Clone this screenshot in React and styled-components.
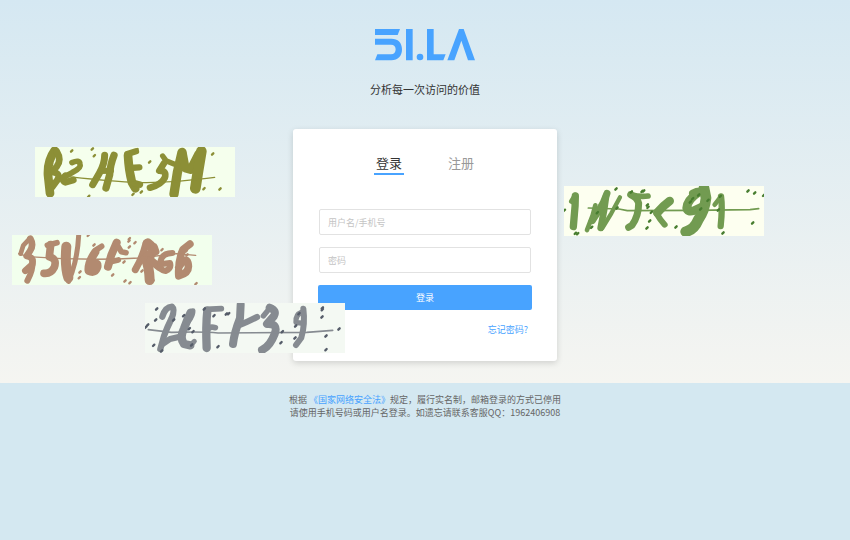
import React from "react";
import styled, { createGlobalStyle } from "styled-components";

const GlobalStyle = createGlobalStyle`
  *, *::before, *::after { box-sizing: border-box; }
  body {
    margin: 0;
    background: #d4e8f1;
    color: #666;
    font-family: "Noto Sans CJK SC", "Noto Sans", sans-serif;
    font-size: 9px;
  }
  button, input { font: inherit; }
`;

const Page = styled.div`
  position: relative;
  overflow: hidden;
`;

const Hero = styled.main`
  display: flex;
  flex-direction: column;
  align-items: center;
  padding: 28px 16px 22px;
  background: linear-gradient(180deg, #d5e8f2 0%, #f5f5f1 100%);
`;

const LogoMark = styled.svg`
  display: block;
  width: 102px;
  height: 34px;
  fill: #48a3ff;
`;

const Tagline = styled.h1`
  margin: 19px 0 31px;
  font-size: 11px;
  font-weight: 400;
  line-height: 17px;
  color: #333;
`;

const Card = styled.section`
  width: 100%;
  max-width: 264px;
  padding: 24px 26px 23px;
  border-radius: 3px;
  background: #fff;
  box-shadow: 0 2px 6px rgba(0, 0, 0, 0.15);
`;

const Tabs = styled.nav`
  display: flex;
  justify-content: center;
  gap: 42px;
`;

const Tab = styled.button`
  padding: 0 2px;
  border: 0;
  border-bottom: 2px solid ${(p) => (p.$active ? "#48a3ff" : "transparent")};
  background: none;
  font-size: 13px;
  line-height: 20px;
  color: ${(p) => (p.$active ? "#333" : "#999")};
  cursor: pointer;
`;

const Form = styled.form`
  display: flex;
  flex-direction: column;
  gap: 12px;
  margin-top: 34px;
`;

const Field = styled.input`
  width: 100%;
  height: 26px;
  padding: 0 8px;
  border: 1px solid #e2e2e2;
  border-radius: 2px;
  background: #fff;
  color: #333;
  &::placeholder { color: #c4c4c4; opacity: 1; }
`;

const Submit = styled.button`
  height: 25px;
  margin: 0 -1px;
  padding: 0;
  border: 0;
  border-radius: 2px;
  background: #48a3ff;
  color: #fff;
  cursor: pointer;
`;

const Link = styled.a`
  color: #48a3ff;
  text-decoration: none;
`;

const FormLink = styled(Link)`
  align-self: flex-end;
  padding-right: 3px;
  line-height: 16px;
`;

const Notice = styled.footer`
  padding: 10px 16px;
  text-align: center;
  line-height: 13px;
  p { margin: 0; }
`;

const Picture = styled.svg`
  position: absolute;
  left: ${(p) => p.$left}px;
  top: ${(p) => p.$top}px;
  width: 200px;
  height: 50px;
  background: ${(p) => p.$paper};
  color: ${(p) => p.$ink};
  fill: none;
  stroke: currentColor;
  stroke-linecap: round;
  stroke-linejoin: round;
`;

const captchas = [
  {
    left: 35, top: 147, paper: "#f5ffed", ink: "#8c8f36", dotInk: "#8c8f36", box: "15 21 600 150",
    strokes: [
      [26, "M74 32 Q52 62 54 105 L60 160"],
      [20, "M80 34 Q96 60 80 80 L66 96 Q94 99 82 120 L66 142"],
      [17, "M126 68 Q148 58 150 72 Q155 84 126 98 L98 113"],
      [20, "M106 107 Q92 120 106 127 L130 120"],
      [21, "M224 46 Q224 72 208 100 L188 134"],
      [22, "M252 46 Q240 76 239 104 L228 144"],
      [18, "M212 93 L243 92"],
      [26, "M294 46 Q296 90 306 128 L316 145"],
      [19, "M292 42 L318 34 M300 84 L328 82 M308 128 L330 134"],
      [16, "M398 48 L408 62 L432 72"],
      [20, "M402 70 L388 92 Q412 92 404 114 Q394 134 360 143"],
      [28, "M456 37 L442 98 L432 162"],
      [26, "M458 42 L466 84 L482 89 L506 42"],
      [32, "M514 34 Q504 92 496 145"],
      [4, "M115 110 Q280 128 350 128 Q440 127 530 115 L554 112"],
    ],
    dots: [[125, 33], [187, 27], [193, 47], [359, 66], [548, 42], [522, 146], [570, 147], [176, 169], [334, 156], [309, 163], [321, 29]],
  },
  {
    left: 564, top: 186, paper: "#fdfff0", ink: "#729b51", dotInk: "#477d2f", box: "12 18 600 150",
    strokes: [
      [22, "M46 48 Q46 80 43 104 L40 140"],
      [16, "M35 64 L46 46"],
      [14, "M106 76 L98 106 L81 150"],
      [21, "M141 40 Q131 70 116 92 L97 122"],
      [20, "M138 50 L132 92 L122 144"],
      [13, "M180 52 L154 100 L127 144"],
      [21, "M212 44 Q232 52 236 70 Q236 108 216 136 L206 142"],
      [17, "M213 44 Q242 52 264 48"],
      [26, "M329 63 Q311 76 292 98"],
      [18, "M290 101 Q301 120 314 134"],
      [26, "M414 38 Q382 60 380 84 Q382 98 402 92 L426 81"],
      [32, "M432 24 L438 54 Q434 92 415 119 Q402 150 377 155"],
      [22, "M398 40 Q437 20 436 65"],
      [19, "M483 49 Q488 83 482 138"],
      [14, "M482 51 L464 74"],
      [5, "M85 84 L177 87 L202 92 L403 91 L570 89 L596 86"],
    ],
    dots: [[168, 27], [246, 34], [251, 33], [214, 36], [262, 75], [264, 82], [274, 97], [269, 123], [261, 144], [348, 141], [95, 142], [46, 160], [53, 161], [489, 159], [578, 129], [564, 33], [584, 39], [611, 46], [444, 61], [475, 90], [422, 87], [398, 56], [416, 45], [391, 66], [481, 49], [112, 98], [171, 84], [13, 91]],
  },
  {
    left: 12, top: 235, paper: "#f2ffed", ink: "#b28a70", dotInk: "#b28a70", box: "12 15 600 150",
    strokes: [
      [14, "M38 71 L46 46 L65 26"],
      [20, "M67 26 Q78 45 66 63 L56 78 Q79 82 72 104 L52 122"],
      [18, "M74 90 Q76 120 58 152"],
      [17, "M118 46 L147 38"],
      [23, "M128 44 L124 80 Q148 86 139 112 Q129 132 108 130"],
      [30, "M175 50 Q170 110 181 143"],
      [15, "M212 16 Q209 76 193 124 L182 154"],
      [17, "M264 60 L281 49"],
      [25, "M262 66 Q240 98 242 122 Q262 132 268 110 Q270 94 247 105"],
      [24, "M326 38 L310 75 L300 110"],
      [17, "M324 39 L340 65 L354 68 M308 95 L331 90"],
      [21, "M414 40 Q402 86 382 119"],
      [30, "M419 40 Q450 62 413 86 Q424 112 425 150"],
      [23, "M428 91 L454 112 M438 51 L443 65"],
      [18, "M493 69 Q462 69 457 95 Q452 121 473 123 Q491 115 486 99 L468 101"],
      [22, "M546 42 L525 58 Q509 93 512 138 Q548 128 540 98 Q535 78 512 112"],
      [4, "M32 71 L60 80 Q235 93 394 84 L505 71 L563 76"],
    ],
    dots: [[241, 16], [258, 45], [364, 26], [363, 33], [381, 38], [364, 51], [462, 59], [314, 135], [216, 126], [214, 143], [351, 153], [366, 158], [435, 153], [402, 123], [564, 161], [348, 96], [535, 63], [537, 75]],
  },
  {
    left: 145, top: 303, paper: "#f4f9f3", ink: "#868b91", dotInk: "#555c69", box: "15 15 600 150",
    strokes: [
      [19, "M67 56 Q76 27 96 26 Q106 34 94 63 Q81 89 72 114 L61 153"],
      [18, "M68 138 L90 123 L116 117"],
      [25, "M152 44 Q142 64 132 92 Q118 119 132 138 L151 142"],
      [15, "M159 38 Q160 52 145 71 M150 143 L163 130"],
      [25, "M202 38 Q197 84 200 150"],
      [17, "M199 34 L244 32 M203 95 Q209 84 226 89"],
      [24, "M302 20 L300 61 Q283 104 279 138"],
      [19, "M291 84 Q319 74 351 57"],
      [16, "M370 54 L388 32"],
      [24, "M389 29 Q411 37 402 54 L381 78 Q416 76 404 108 Q390 145 366 156"],
      [16, "M486 42 Q466 50 468 73 L489 76"],
      [18, "M490 32 Q496 78 484 119 L468 141"],
      [5, "M25 95 L94 103 Q192 100 234 105 L500 103 L578 97"],
    ],
    dots: [[50, 33], [47, 66], [41, 142], [23, 81], [17, 88], [101, 66], [131, 53], [148, 92], [159, 101], [155, 141], [193, 33], [222, 53], [259, 48], [266, 47], [234, 146], [427, 101], [423, 134], [465, 120], [467, 84], [477, 47], [547, 30], [547, 35], [546, 57], [597, 93], [558, 114], [558, 155], [65, 159]],
  },
];

function Captcha({ data }) {
  return (
    <Picture
      $left={data.left}
      $top={data.top}
      $paper={data.paper}
      $ink={data.ink}
      viewBox={data.box}
      role="img"
      aria-label="验证码"
    >
      {data.strokes.map(([width, d]) => (
        <path key={d} d={d} strokeWidth={width} />
      ))}
      <g stroke={data.dotInk} strokeWidth="7">
        {data.dots.map(([x, y]) => (
          <path key={`${x}-${y}`} d={`M${x - 2} ${y + 2}l4 -4`} />
        ))}
      </g>
    </Picture>
  );
}

function Logo() {
  return (
    <LogoMark viewBox="0 0 306 102" role="img" aria-label="51.LA">
      <path d="M3 3H78L71 21H3Z" />
      <path d="M3 32H52C72 32 84 44 84 64C84 84 72 97 52 97H3L10 79H51C60 79 65 73 65 64C65 55 60 50 51 50H3Z" />
      <path d="M96 3H116V97H96Z M159 3H179V79H215L208 97H159Z" />
      <circle cx="138" cy="87" r="10" />
      <path d="M255 3H269L303 97H282L262 38L241 97H220Z" />
    </LogoMark>
  );
}

export default function App() {
  return (
    <>
      <GlobalStyle />
      <Page>
        <Hero>
          <Logo />
          <Tagline>分析每一次访问的价值</Tagline>
          <Card>
            <Tabs>
              <Tab type="button" $active aria-current="page">登录</Tab>
              <Tab type="button">注册</Tab>
            </Tabs>
            <Form onSubmit={(event) => event.preventDefault()}>
              <Field type="text" placeholder="用户名/手机号" aria-label="用户名/手机号" />
              <Field type="password" placeholder="密码" aria-label="密码" />
              <Submit type="submit">登录</Submit>
              <FormLink href="#forgot">忘记密码?</FormLink>
            </Form>
          </Card>
        </Hero>
        <Notice>
          <p>根据 <Link href="#law">《国家网络安全法》</Link>规定，履行实名制，邮箱登录的方式已停用</p>
          <p>请使用手机号码或用户名登录。如遗忘请联系客服QQ：1962406908</p>
        </Notice>
        {captchas.map((data) => (
          <Captcha key={data.left} data={data} />
        ))}
      </Page>
    </>
  );
}
